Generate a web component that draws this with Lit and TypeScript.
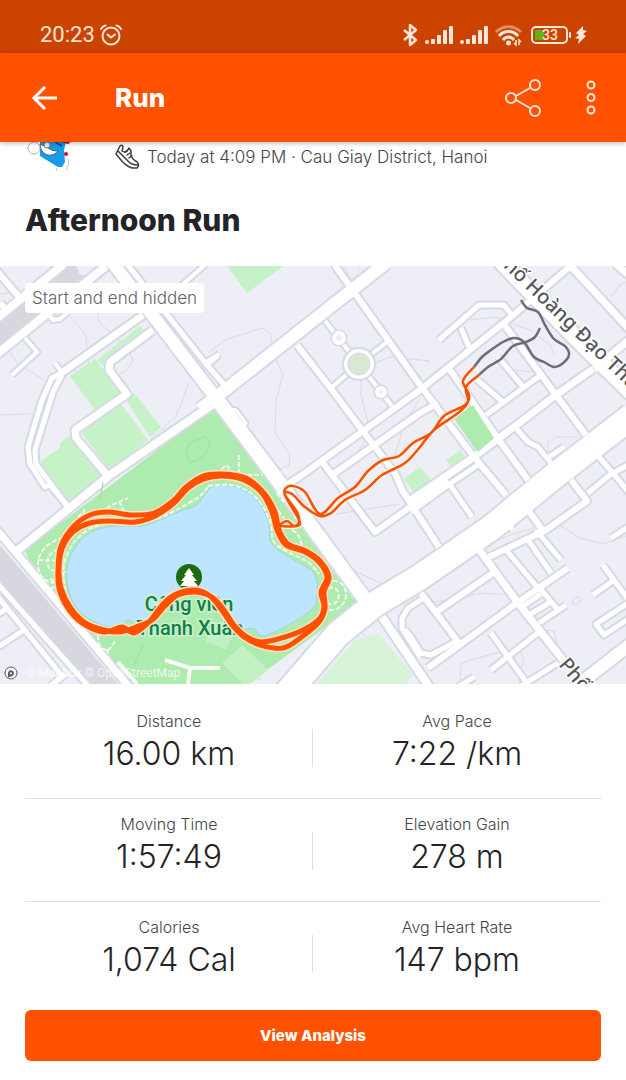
import { LitElement, html, svg, css } from 'lit';
import { customElement, property } from 'lit/decorators.js';

type Point = [number, number];

interface Road {
    width: number;
    path: string;
}

interface Stat {
    label: string;
    value: string;
}

// Smooth curve through a list of points (Catmull-Rom to cubic bezier)
function smooth(points: Point[], closed = false): string {
    const n = points.length;
    const at = (i: number) => (closed ? points[(i + n) % n] : points[Math.max(0, Math.min(n - 1, i))]);
    let d = `M${points[0][0]} ${points[0][1]}`;
    for (let i = 0; i < (closed ? n : n - 1); i++) {
        const [a, b, c, e] = [at(i - 1), at(i), at(i + 1), at(i + 2)];
        d += `C${b[0] + (c[0] - a[0]) / 6} ${b[1] + (c[1] - a[1]) / 6} ${c[0] - (e[0] - b[0]) / 6} ${c[1] - (e[1] - b[1]) / 6} ${c[0]} ${c[1]}`;
    }
    return closed ? d + 'Z' : d;
}

const ROADS: Road[] = [
    // west side
    { width: 6, path: 'M-4 270L20 298M0 303L8 312' },
    { width: 8, path: 'M-4 319L64 264M-4 355L106 266' },
    { width: 4, path: 'M25 338L37 352L12 375M55 363L63 374M173 293L206 264M205 367L218 356M205 363L219 354' },
    { width: 4, path: 'M50 316L53 320L60 319L68 312' },
    { width: 7, path: 'M60 374L143 315' },
    { width: 5, path: 'M60 374L52 378L42 400L28 447L30 464L45 487L50 485L68 507' },
    { width: 5, path: 'M62 375L53 392L35 450L36 464L68 507' },
    { width: 7, path: 'M153 330L110 362L109 370L127 394L75 430L76 438L108 476' },
    { width: 8, path: 'M216 402L110 475L18 550' },
    { width: 4, path: 'M100 468L108 479' },
    { width: 7, path: 'M-4 529L130 688' },
    { width: 5, path: 'M-4 582L90 688' },
    { width: 5, path: 'M-2 597L62 676M-2 647L24 630M-2 614L8 608M50 686L66 674' },
    // main avenue and the lane next to it
    { width: 5, path: 'M127 264L207 365L228 389' },
    { width: 12, path: 'M112 262L215 397' },
    { width: 14, path: 'M213 394L270 470L370 606' },
    { width: 3, path: 'M230 409L236 410L246 423L243 428' },
    { width: 12, path: 'M200 409L215 398L386 263' },
    // centre blocks
    { width: 6, path: 'M334 264L420 385L474 457L506 495' },
    { width: 6, path: 'M297 345L332 390L362 430L385 460L396 475L402 490L439 547' },
    { width: 6, path: 'M320 459L375 532L420 500L448 480' },
    { width: 6, path: 'M285 486L302 475L420 390L511 317L573 264' },
    { width: 6, path: 'M332 475L420 413L438 403' },
    { width: 4, path: 'M325 321L359 364L392 406M387 342L359 364L331 388' },
    // east blocks
    { width: 16, path: 'M500 260L521 282L588 350L632 393' },
    { width: 7, path: 'M569 264L630 330M616 264L630 276M630 339L594 369' },
    { width: 7, path: 'M593 369L556 395L514 427L471 459L411 500' },
    { width: 5, path: 'M478 465L448 485L411 512' },
    { width: 6, path: 'M503 323L556 395L586 435M448 367L499 440L528 480' },
    { width: 5, path: 'M486 415L541 375M474 377L503 402M498 357L524 388M461 328L469 347' },
    { width: 5, path: 'M439 340L479 305L504 305L511 314' },
    { width: 5, path: 'M516 428L528 442L538 447L551 463M564 447L549 457' },
    { width: 5, path: 'M448 482L472 517' },
    // south east blocks
    { width: 5, path: 'M599 457L617 478L630 494M588 493L611 474L630 464' },
    { width: 6, path: 'M571 480L587 501L546 530L489 557M528 510L544 532' },
    { width: 5, path: 'M536 530L561 560M526 537L551 573M506 550L538 588M508 524L513 530' },
    { width: 7, path: 'M478 548L518 603L563 660' },
    { width: 6, path: 'M568 568L514 605L428 668' },
    { width: 5, path: 'M539 587L558 610M566 605L539 623M523 606L541 594M529 615L549 603' },
    { width: 6, path: 'M493 573L436 612M421 593L459 643' },
    { width: 5, path: 'M405 630L411 637L421 653L431 655L457 641' },
    { width: 5, path: 'M424 598L408 608L402 618L402 628L420 657' },
    { width: 8, path: 'M382 617L430 688' },
    { width: 5, path: 'M491 633L529 686M539 632L491 670M558 663L521 686M474 677L458 687' },
    { width: 5, path: 'M603 565L630 602M593 595L614 580M630 602L596 624L604 635L630 618M611 538L630 526' },
    { width: 12, path: 'M574 688L632 643' },
    { width: 25, path: 'M286 694L338 634L375 604L420 577L491 528L553 477L632 416' },
];

const FOOTPATHS = [
    'M0 294L14 292M10 352L18 364L46 381M0 415L45 413L54 403M67 313L86 335L87 355M96 305L99 322L125 345L133 360L127 370L112 378',
    'M87 355L91 375L103 387L118 384M188 385L182 402L175 417L150 440M208 353L225 340L262 328L270 333L275 358L283 375L276 400L275 432L290 455L289 465L278 470',
    'M344 266L350 280L357 276L359 266M374 363L390 357L420 360M361 380L361 395L370 430L357 455M420 398L404 425L395 455M411 359L430 361',
    'M470 320L495 317L530 330L550 345L555 355M516 370L530 372L541 366M611 297L620 285L626 282M426 383L440 375L445 367',
    'M548 455L548 442L556 437L578 437M336 514L400 504M355 571L382 584L389 584M360 632L376 643L378 655L367 684',
    'M559 525L580 538L603 544L626 536M484 547L510 535L535 528M426 592L434 602L462 598L480 593L510 595M460 684L461 664L470 660L501 652L521 652L524 662L518 672',
    'M546 630L554 631L560 655M573 600L578 596L582 600L577 604L573 604ZM230 684L240 678L262 679M135 664L143 645',
    'M186 452L190 443L204 437L210 441L208 450L200 459L190 463Z',
];

const PARK_PATHS = [
    'M70 536C50 540 38 550 38 565C38 575 44 582 55 583M66 548C48 550 44 560 50 570L66 572M38 560L62 561M44 592L58 585L50 578',
    'M78 517L84 511L84 518M100 512L112 505L128 498M119 501L124 512M98 635C98 650 103 648 108 651L116 640M107 649L109 660',
    'M216 474L226 465L232 472M239 455L239 475L262 475M326 581C345 578 348 592 345 600C340 612 330 611 324 608M328 588C336 586 341 592 338 599C336 605 330 605 326 603',
    'M274 505L284 518M292 530C300 534 300 540 303 548M277 493L284 502M280 488L287 499M284 478L289 484M279 471L284 476',
];

const LAKE: Point[] = [
    [214, 486], [204, 496], [195, 506], [178, 512], [160, 520], [142, 526], [118, 526], [96, 530], [80, 541],
    [69, 560], [67, 580], [73, 602], [86, 617], [106, 626], [121, 625], [128, 620], [140, 624], [158, 612],
    [176, 596], [196, 592], [212, 598], [226, 614], [240, 628], [254, 629], [263, 636], [290, 624], [313, 608],
    [317, 596], [317, 583], [312, 571], [296, 561], [278, 550], [270, 540], [269, 524], [262, 508], [250, 494],
    [232, 486],
];

const SHORE_PATH: Point[] = [
    [208, 487], [200, 496], [182, 507], [162, 517], [142, 523], [118, 523], [94, 527], [76, 540], [65, 560],
    [64, 582], [70, 604], [84, 619], [106, 629], [128, 629],
];

const SHORE_PATH_EAST: Point[] = [
    [208, 486], [232, 485], [252, 494], [265, 510], [271, 526], [274, 542], [288, 552], [308, 562], [319, 574],
];

const LAP: Point[] = [
    [222, 476], [244, 480], [262, 493], [272, 512], [277, 530], [286, 545], [305, 552], [319, 562], [327, 577],
    [321, 592], [324, 606], [320, 618], [305, 629], [285, 637], [262, 642], [247, 637], [234, 625], [224, 610],
    [212, 597], [195, 592], [178, 595], [165, 606], [152, 620], [136, 627], [120, 632], [104, 630], [84, 622],
    [70, 607], [61, 588], [59, 570], [62, 549], [73, 532], [90, 523], [110, 521], [135, 522], [155, 516],
    [174, 503], [188, 488], [204, 479],
];

const LAP_OUTER: Point[] = [
    [222, 474], [246, 478], [264, 493], [275, 512], [279, 530], [288, 544], [306, 551], [320, 561], [329, 577],
    [324, 592], [325, 608], [319, 622], [303, 636], [283, 648], [260, 645], [244, 637], [232, 625], [221, 609],
    [210, 596], [195, 590], [176, 594], [163, 604], [149, 622], [134, 633], [122, 627], [104, 632], [82, 623],
    [67, 607], [59, 588], [58, 570], [61, 546], [74, 526], [90, 515], [108, 512], [132, 515], [154, 513],
    [173, 501], [186, 487], [203, 476],
];

const BRANCH_OUT: Point[] = [
    [278, 526], [287, 521], [294, 526], [299, 522], [297, 512], [285, 495], [286, 488], [293, 486], [305, 492],
    [320, 514], [338, 498], [355, 487], [368, 471], [383, 460], [399, 456], [413, 443], [431, 433], [444, 416],
    [465, 405], [469, 395], [463, 381], [474, 367],
];

const BRANCH_BACK: Point[] = [
    [280, 526], [297, 526], [299, 520], [285, 495], [292, 494], [305, 507], [320, 516], [331, 513], [345, 500],
    [365, 490], [382, 475], [405, 463], [420, 447], [434, 430], [458, 413], [468, 402], [466, 387], [479, 375],
];

const HIDDEN_START: Point[] = [
    [474, 367], [482, 357], [491, 350], [503, 342], [514, 338], [524, 342], [534, 357], [544, 362], [554, 367],
    [562, 364], [569, 355], [565, 346], [554, 339], [545, 325], [538, 312], [527, 308], [521, 300],
];

const HIDDEN_END: Point[] = [
    [479, 375], [488, 367], [501, 359], [513, 346], [526, 342], [535, 337], [540, 328],
];

const STATS: Stat[] = [
    { label: 'Distance', value: '16.00 km' },
    { label: 'Avg Pace', value: '7:22 /km' },
    { label: 'Moving Time', value: '1:57:49' },
    { label: 'Elevation Gain', value: '278 m' },
    { label: 'Calories', value: '1,074 Cal' },
    { label: 'Avg Heart Rate', value: '147 bpm' },
];

@customElement('status-bar')
export class StatusBar extends LitElement {
    @property({ type: String }) time = '';
    @property({ type: Number }) battery = 0;

    static styles = css`
    :host {
      display: flex;
      justify-content: space-between;
      align-items: center;
      height: 37px;
      padding: 16px 38px 0 40px;
      background: #cc4300;
      color: #ffe6d8;
      font-family: Roboto, sans-serif;
      font-size: 22px;
    }

    .clock,
    .icons {
      display: flex;
      align-items: center;
    }

    .clock {
      gap: 4px;
    }

    .icons {
      gap: 7px;
    }

    svg {
      display: block;
      overflow: visible;
    }

    .level {
      font-size: 14px;
      font-weight: 500;
    }
  `;

    private renderSignal() {
        return html`
      <svg width="28" height="20" fill="currentColor">
        <circle cx="2" cy="17" r="2" />
        <rect x="6" y="14" width="4" height="5" rx="1" />
        <rect x="12" y="10" width="4" height="9" rx="1" />
        <rect x="18" y="5" width="4" height="14" rx="1" />
        <rect x="24" y="1" width="4" height="18" rx="1" />
      </svg>
    `;
    }

    render() {
        return html`
      <div class="clock">
        <span>${this.time}</span>
        <svg width="24" height="22" fill="none" stroke="currentColor" stroke-width="2" stroke-linecap="round">
          <circle cx="12" cy="12" r="8.5" />
          <path d="M8.500 10.500l3.500 3l4-3M2 5C3 3 4.500 2 6.500 1.500M17.500 1.500C19.500 2 21 3 22 5" />
        </svg>
      </div>
      <div class="icons">
        <svg width="16" height="22" fill="none" stroke="currentColor" stroke-width="2.500" stroke-linejoin="round">
          <path d="M2 6l12 10l-6 5V1l6 5L2 16" />
        </svg>
        ${this.renderSignal()}
        ${this.renderSignal()}
        <svg width="28" height="22" fill="none" stroke="currentColor" stroke-width="3">
          <path d="M1 8C8 1 19 1 26 8" opacity="0.45" />
          <path d="M4 12C9 6 18 6 23 12M8 16C11 12 16 12 19 16" />
          <circle cx="13.500" cy="19" r="2.500" fill="currentColor" stroke="none" />
          <path d="M21 16v5l-2-2M24 21v-5l2 2" stroke-width="1.500" />
        </svg>
        <svg width="58" height="20">
          <rect x="2" y="2" width="35" height="16" rx="4" fill="none" stroke="currentColor" stroke-width="2" />
          <rect x="5" y="5" width="9" height="10" rx="1" fill="#63b317" />
          <text class="level" x="20" y="15" text-anchor="middle" fill="currentColor">${this.battery}</text>
          <rect x="39" y="7" width="2" height="6" rx="1" fill="currentColor" />
          <path d="M53 1L46 8l3 2l-4 3l4 1l-1 5l8-8l-3-2l4-3l-4-1z" fill="currentColor" />
        </svg>
      </div>
    `;
    }
}

@customElement('route-map')
export class RouteMap extends LitElement {
    static styles = css`
    :host {
      display: block;
      position: relative;
      background: #edeef6;
    }

    svg {
      display: block;
      width: 100%;
      height: auto;
    }

    .notice {
      position: absolute;
      top: 17px;
      left: 25px;
      padding: 0 7px;
      border-radius: 4px;
      background: #fff;
      color: #62626a;
      font-size: 17px;
      line-height: 30px;
      font-weight: 300;
    }

    .street {
      font: 500 20px 'Noto Sans', sans-serif;
      fill: #55565c;
      stroke: #fff;
      stroke-width: 3px;
      paint-order: stroke;
    }

    .park {
      font: 500 20px Roboto, sans-serif;
      fill: #12813a;
      stroke: #c9f0d8;
      stroke-width: 3px;
      paint-order: stroke;
    }

    .credit {
      font: 12px Roboto, sans-serif;
      fill: #fff;
      fill-opacity: 0.75;
    }
  `;

    private renderRoads() {
        return svg`
      <g fill="none" stroke="#d6d9e6" stroke-linejoin="round">
        ${ROADS.map(road => svg`<path d=${road.path} stroke-width=${road.width + 4} />`)}
      </g>
      <g fill="none" stroke="#fff" stroke-linejoin="round">
        ${ROADS.map(road => svg`<path d=${road.path} stroke-width=${road.width} />`)}
      </g>
    `;
    }

    private renderRoute() {
        const branches = smooth(BRANCH_OUT) + smooth(BRANCH_BACK);
        const laps = smooth(LAP, true) + smooth(LAP_OUTER, true);
        const hidden = smooth(HIDDEN_START) + smooth(HIDDEN_END);
        return svg`
      <g fill="none" stroke-linejoin="round">
        <path d=${branches} stroke="#fff0e0" stroke-width="5" />
        <path d=${laps} stroke="#fbe3c4" stroke-width="8" />
        <path d=${hidden} stroke="#6c6d78" stroke-width="2.500" />
        <path d=${branches} stroke="#f4520c" stroke-width="2.500" />
        <path d=${laps} stroke="#ff5100" stroke-width="5" />
      </g>
    `;
    }

    render() {
        return html`
      <svg viewBox="0 266 626 418" role="img" aria-label="Route map">
        <rect y="266" width="626" height="418" fill="#edeef6" />
        <g fill="none" stroke="#dadce4" stroke-width="1">
          ${FOOTPATHS.map(d => svg`<path d=${d} />`)}
        </g>
        <g fill="#c6f2c7">
          <path d="M97 360L140 326L146 332L104 366ZM70 376L95 359L121 392L95 410ZM81 432L121 404L148 440L110 470Z" />
          <path d="M125 398L134 393L161 427L150 437ZM40 462L60 448L60 443L72 434L106 477L70 503Z" />
          <path d="M227 266L283 266L247 293ZM446 460L461 450L464 457L451 467ZM404 479L420 467L431 480L414 493Z" />
        </g>
        <path d="M356 640L378 634L412 674L408 684H316Z" fill="#d7f3d8" />
        <path d="M213 408L25 550L28 558L130 684H248L357 604L268 482Z" fill="#aeebae" />
        <path d="M222 663L242 645L268 670L250 684H243ZM212 620L234 632L226 650L206 642Z" fill="#c1f1c2" />
        <path d="M454 418L473 405L494 438L478 452Z" fill="#aeebae" stroke="#d2dae0" />
        <path d="M0 323L67 266H76L80 275L87 275L86 283L0 345ZM-2 543L118 684H84L-2 582Z" fill="#d6d7df" />
        ${this.renderRoads()}
        <path d="M454 418L473 405L494 438L478 452Z" fill="#aeebae" />
        <g fill="none" stroke="#a3dba9" stroke-width="1">
          <path d=${FOOTPATHS[7]} />
          <path d="M103 482L100 500M135 664L143 645" />
        </g>
        <g fill="#edeef6" stroke="#d6d9e6">
          <circle cx="359" cy="364" r="17" stroke="none" fill="#d6d9e6" />
          <circle cx="359" cy="364" r="15" stroke="none" fill="#fff" />
          <circle cx="359" cy="364" r="11" fill="#d9e8d3" />
          <circle cx="339" cy="338" r="5" stroke="#d6d9e6" stroke-width="7" />
          <circle cx="339" cy="338" r="5" stroke="#fff" stroke-width="4" />
          <circle cx="381" cy="392" r="4" stroke="#d6d9e6" stroke-width="7" />
          <circle cx="381" cy="392" r="4" stroke="#fff" stroke-width="4" />
        </g>
        <path d="M118 662L137 684M165 660L190 668H220M190 668L188 684" fill="none" stroke="#f7fcf7" stroke-width="4" />
        <path d=${smooth(LAKE, true)} fill="#bee5ff" stroke="#9fd4e4" />
        <g fill="none" stroke="#f3fbf0" stroke-width="2" stroke-dasharray="5 2">
          ${PARK_PATHS.map(d => svg`<path d=${d} />`)}
          <path d=${smooth(SHORE_PATH) + smooth(SHORE_PATH_EAST)} />
        </g>
        <circle cx="189" cy="577" r="13" fill="#1c6b0e" />
        <path d="M189 568L194 575H192L197 581H194L198 586H190V589H188V586H180L184 581H181L186 575H184Z" fill="#fff" />
        <text class="park" x="189" y="611" text-anchor="middle">Công viên</text>
        <text class="park" x="190" y="635" text-anchor="middle">Thanh Xuân</text>
        <text class="street" transform="translate(494 258) rotate(44)">Phố Hoàng Đạo Thúy</text>
        <text class="street" transform="translate(558 665) rotate(50)">Phố</text>
        ${this.renderRoute()}
        <g fill="none" stroke="#5c5d66">
          <circle cx="11" cy="673" r="6" fill="#fff" fill-opacity="0.6" />
          <path d="M9 676V673A2 2 0 1 1 12 675Z" stroke-width="2" />
        </g>
        <text class="credit" x="26" y="677">© Mapbox © OpenStreetMap</text>
      </svg>
      <span class="notice">Start and end hidden</span>
    `;
    }
}

@customElement('app-root')
export class AppRoot extends LitElement {
    static styles = css`
    :host {
      display: block;
      background: #fff;
      color: #242428;
      font-family: Inter, sans-serif;
    }

    button {
      border: 0;
      padding: 0;
      background: none;
      color: inherit;
      font: inherit;
    }

    svg {
      display: block;
    }

    .app-bar {
      position: relative;
      display: flex;
      align-items: center;
      height: 89px;
      padding: 0 28px 0 30px;
      background: #ff5100;
      color: #fff;
      box-shadow: 0 1px 5px rgba(0, 0, 0, 0.3);
    }

    .app-bar h1 {
      flex: 1;
      margin: 0 0 0 57px;
      font-size: 26px;
      font-weight: 800;
    }

    .actions {
      display: flex;
      align-items: center;
      gap: 43px;
    }

    .meta {
      display: flex;
      align-items: center;
      gap: 44px;
      height: 30px;
      padding: 0 25px;
    }

    .when {
      display: flex;
      align-items: center;
      gap: 6px;
      color: #45454b;
      font-size: 17px;
      font-weight: 300;
    }

    .title {
      margin: 0;
      padding: 28px 25px 26px;
      font-size: 30px;
      line-height: 40px;
      font-weight: 800;
    }

    .stats {
      display: grid;
      grid-template-columns: 1fr 1fr;
      margin: 12px 25px 0;
    }

    .stat {
      display: flex;
      flex-direction: column;
      align-items: center;
      height: 87px;
      padding-top: 15px;
      border-bottom: 1px solid #e1e1e5;
      background: linear-gradient(#dfdfe3, #dfdfe3) no-repeat right 33px / 1px 38px;
    }

    .stat:nth-child(even) {
      background: none;
    }

    .stat:nth-last-child(-n + 2) {
      border-bottom: 0;
    }

    .stat dt {
      color: #45454b;
      font-size: 16px;
      line-height: 20px;
      font-weight: 300;
    }

    .stat dd {
      margin: 4px 0 0;
      font-size: 32px;
      line-height: 38px;
      font-weight: 300;
    }

    .footer {
      padding: 6px 25px 18px;
    }

    .analysis {
      width: 100%;
      border-radius: 6px;
      background: #ff5100;
      color: #fff;
      font-size: 15px;
      font-weight: 800;
      line-height: 51px;
    }
  `;

    private renderAppBar() {
        return html`
      <header class="app-bar">
        <button aria-label="Back">
          <svg width="28" height="28" fill="none" stroke="currentColor" stroke-width="3">
            <path d="M27 14H4M15 3L4 14L15 25" />
          </svg>
        </button>
        <h1>Run</h1>
        <div class="actions">
          <button aria-label="Share">
            <svg width="36" height="38" fill="none" stroke="#ffe9d8" stroke-width="2">
              <circle cx="6" cy="19" r="5" />
              <circle cx="30" cy="6" r="5" />
              <circle cx="30" cy="32" r="5" />
              <path d="M11 17L25 9M11 21L25 29" />
            </svg>
          </button>
          <button aria-label="More options">
            <svg width="14" height="36" fill="none" stroke="#ffe9d8" stroke-width="2">
              <circle cx="7" cy="5" r="3.500" />
              <circle cx="7" cy="17.500" r="3.500" />
              <circle cx="7" cy="30" r="3.500" />
            </svg>
          </button>
        </div>
      </header>
    `;
    }

    private renderMeta() {
        return html`
      <div class="meta">
        <svg width="46" height="30" role="img" aria-label="Athlete">
          <path d="M15 0H41L39 8L40 20L37 25L33 25L15 14Z" fill="#189be8" />
          <path d="M15 2C16 16 29 15 33 9C29 9 25 8 22 5Z" fill="#fff" stroke="#38627e" stroke-width="1" />
          <circle cx="22" cy="3" r="3" fill="#eee" stroke="#777" />
          <path d="M36 0H46L43 2L39 1Z" fill="#9c2033" />
          <path d="M30 0L37 4" stroke="#1b4c91" stroke-width="2" />
          <circle cx="9" cy="6" r="6" fill="#fff" stroke="#b3b3b3" />
          <circle cx="41" cy="12" r="2" fill="#b9182f" />
          <path d="M42 16C45 20 43 25 41 28M31 26L32 29" fill="none" stroke="#c3c6cc" />
        </svg>
        <div class="when">
          <svg width="26" height="28" fill="none" stroke="#3e3e44" stroke-width="1.500" stroke-linejoin="round" stroke-linecap="round">
            <path d="M1 11L5 3Q7 1 8 4L7 8Q10 10 12 8L14 5L16 8V13Q18 17 22 19Q25 22 22 25H17Q11 23 6 17Z" />
            <path d="M3 8L14 19Q17 22 23 22M12 12L15 10M14 15L17 13M10 9L12 8" />
          </svg>
          <span>Today at 4:09 PM · Cau Giay District, Hanoi</span>
        </div>
      </div>
    `;
    }

    render() {
        return html`
      <status-bar time="20:23" battery="33"></status-bar>
      ${this.renderAppBar()}
      <main>
        ${this.renderMeta()}
        <h2 class="title">Afternoon Run</h2>
        <route-map></route-map>
        <dl class="stats">
          ${STATS.map(stat => html`
            <div class="stat">
              <dt>${stat.label}</dt>
              <dd>${stat.value}</dd>
            </div>
          `)}
        </dl>
        <div class="footer">
          <button class="analysis">View Analysis</button>
        </div>
      </main>
    `;
    }
}
